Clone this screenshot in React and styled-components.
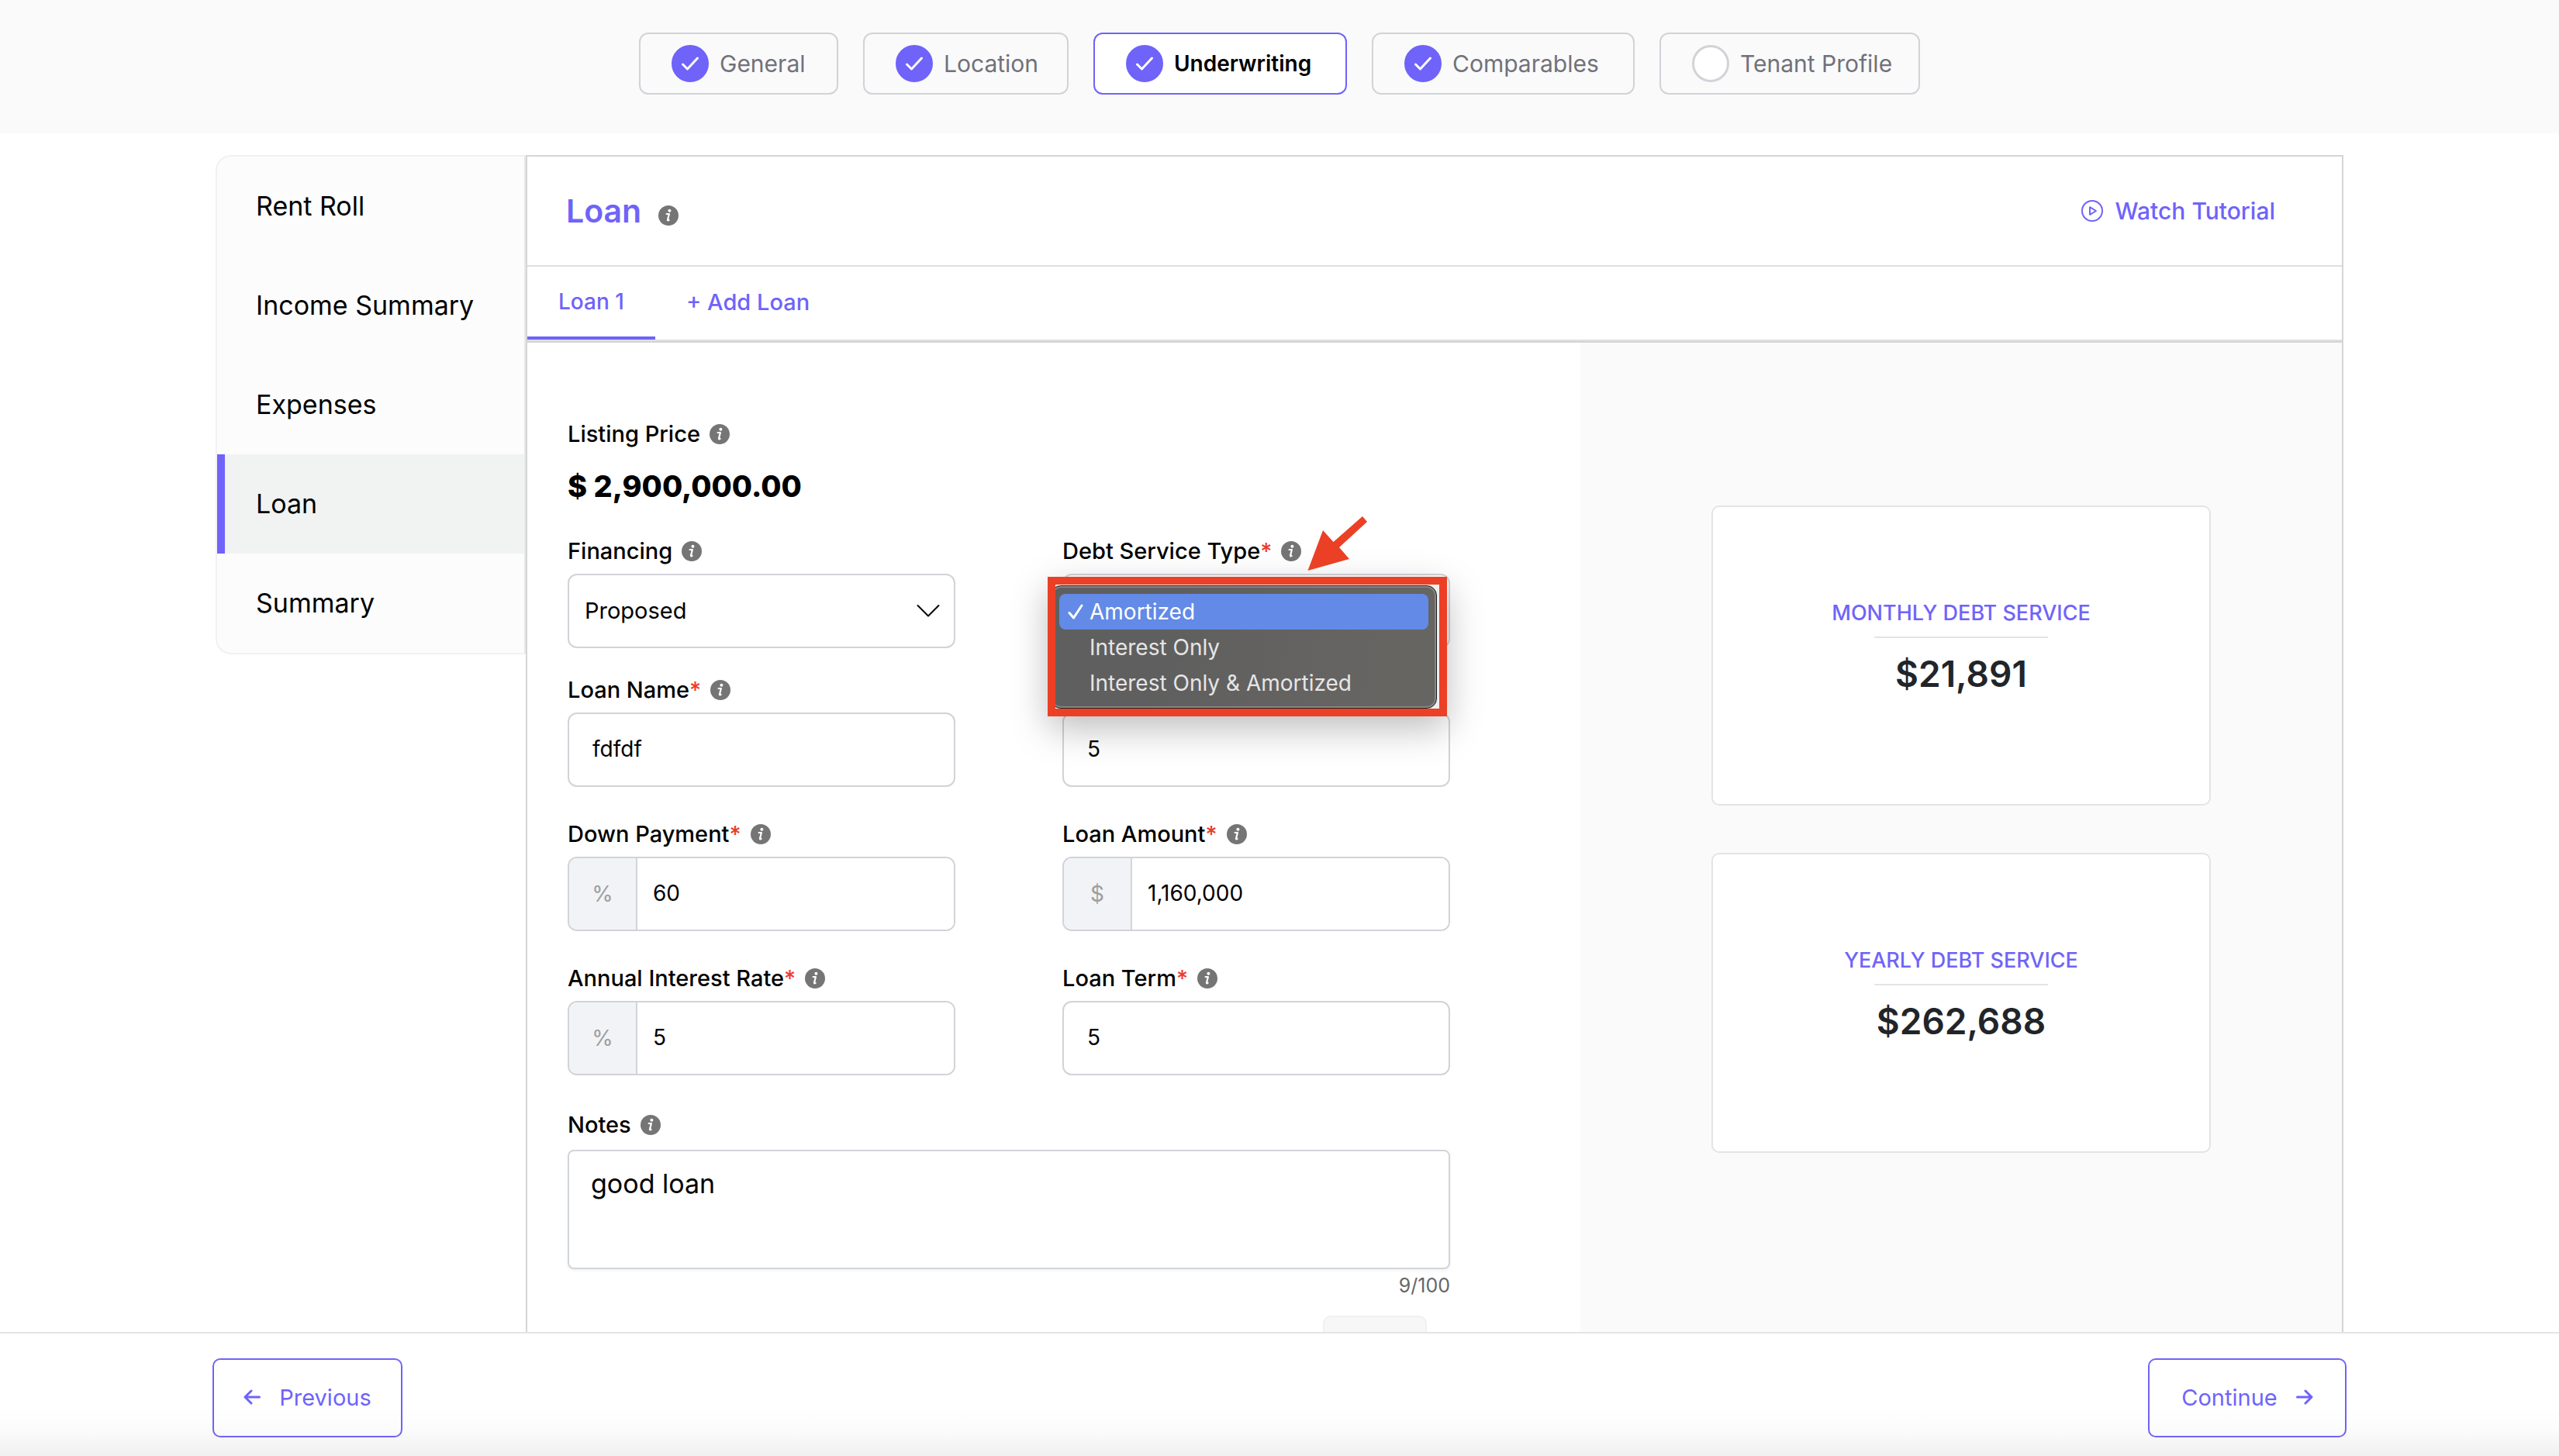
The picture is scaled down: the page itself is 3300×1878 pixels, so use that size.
import React, { useState } from "react";
import styled, { createGlobalStyle } from "styled-components";

const accent = "#6f63f9";
const line = "#d2d3d8";

const GlobalStyle = createGlobalStyle`
  *, *::before, *::after { box-sizing: border-box; }
  body { margin: 0; background: #fff; }
  body, button, input, select, textarea {
    font-family: Inter, "Open Sans", "Liberation Sans", sans-serif;
    color: #000;
  }
  button { cursor: pointer; }
`;

const Page = styled.div`
  display: flex;
  flex-direction: column;
  height: 100vh;
  overflow: hidden;
`;

/* ---------- stepper ---------- */

const Stepper = styled.nav`
  flex: none;
  display: flex;
  justify-content: center;
  gap: 32px;
  padding: 42px 32px 50px;
  background: #fafafa;
`;

const Step = styled.button`
  display: flex;
  align-items: center;
  gap: 14px;
  width: ${(p) => p.$width}px;
  height: 80px;
  padding: 0 40px;
  border: 2px solid ${(p) => (p.$active ? accent : line)};
  border-radius: 12px;
  background: ${(p) => (p.$active ? "#fff" : "transparent")};
  color: ${(p) => (p.$active ? "#000" : "#71717a")};
  font-size: ${(p) => (p.$active ? 28 : 30)}px;
  font-weight: ${(p) => (p.$active ? 600 : 400)};
  white-space: nowrap;
`;

const StepMark = styled.span`
  flex: none;
  display: flex;
  align-items: center;
  justify-content: center;
  width: 48px;
  height: 48px;
  border: 3px solid ${(p) => (p.$done ? accent : line)};
  border-radius: 50%;
  background: ${(p) => (p.$done ? accent : "#fff")};
`;

/* ---------- body ---------- */

const Body = styled.div`
  flex: 1;
  min-height: 0;
  overflow-y: auto;
  scrollbar-width: none;
  display: flex;
  align-items: flex-start;
  width: 100%;
  max-width: 2808px;
  margin: 0 auto;
  padding: 28px 32px 0;
`;

const Sidebar = styled.nav`
  flex: 0 0 400px;
  display: flex;
  flex-direction: column;
  border: 2px solid #f1f1f1;
  border-right-color: #e8e8ea;
  border-radius: 20px 0 0 20px;
  background: #fcfcfc;
  overflow: hidden;
`;

const SideLink = styled.a`
  display: flex;
  align-items: center;
  height: 128px;
  padding: 0 0 2px 40px;
  border-left: 10px solid ${(p) => (p.$active ? accent : "transparent")};
  background: ${(p) => (p.$active ? "#f0f3f2" : "transparent")};
  color: #000;
  font-size: 34px;
  text-decoration: none;
`;

const Panel = styled.main`
  flex: 1;
  min-width: 0;
  border: 2px solid #d5d5d5;
`;

const PanelHeader = styled.header`
  display: flex;
  align-items: center;
  justify-content: space-between;
  height: 142px;
  padding: 0 86px 0 50px;
  border-bottom: 2px solid #dfdfdf;
`;

const Title = styled.h1`
  display: flex;
  align-items: flex-end;
  gap: 22px;
  margin: 0;
  color: ${accent};
  font-size: 41px;
  font-weight: 600;
  line-height: 38px;
`;

const TutorialLink = styled.a`
  display: flex;
  align-items: center;
  gap: 16px;
  color: ${accent};
  font-size: 30px;
  font-weight: 500;
  text-decoration: none;
`;

const Tabs = styled.div`
  display: flex;
  height: 96px;
  border-bottom: 2px solid #dfdfdf;
`;

const Tab = styled.button`
  min-width: ${(p) => (p.$active ? 165 : 238)}px;
  padding: 0 40px;
  border: 0;
  border-bottom: 4px solid ${(p) => (p.$active ? accent : "transparent")};
  background: none;
  color: ${accent};
  font-size: ${(p) => (p.$active ? 28 : 29)}px;
  font-weight: 500;
  text-align: left;
  white-space: nowrap;
`;

const Columns = styled.div`
  display: grid;
  grid-template-columns: minmax(0, 1358fr) minmax(0, 982fr);
  border-top: 2px solid #d4d4d4;
`;

/* ---------- form ---------- */

const Form = styled.form`
  padding: 102px 168px 48px 52px;
`;

const Grid = styled.div`
  display: grid;
  grid-template-columns: repeat(2, minmax(0, 1fr));
  column-gap: 138px;
  row-gap: 45px;
  align-items: end;
  margin-bottom: ${(p) => p.$after}px;
`;

const Field = styled.div`
  display: flex;
  flex-direction: column;
  gap: ${(p) => p.$gap || 13}px;
`;

const LabelRow = styled.div`
  display: flex;
  align-items: center;
  gap: 12px;
  height: 32px;
  font-size: 29px;
  font-weight: 500;
  line-height: 32px;
  white-space: nowrap;
`;

const Required = styled.span`
  color: #ee3a2b;
`;

const Price = styled.p`
  margin: 27px 0 44px;
  font-size: 38px;
  font-weight: 800;
  line-height: 48px;
`;

const TextInput = styled.input`
  width: 100%;
  height: 96px;
  padding: 0 30px 2px;
  border: 2px solid ${line};
  border-radius: 12px;
  background: #fff;
  font-size: 28px;
`;

const Group = styled.div`
  display: flex;
  height: 96px;
  border: 2px solid ${line};
  border-radius: 12px;
  overflow: hidden;
`;

const Prefix = styled.span`
  flex: 0 0 88px;
  display: flex;
  align-items: center;
  justify-content: center;
  border-right: 2px solid #d1d5db;
  background: #f2f3f6;
  color: #9e9e9e;
  font-size: 28px;
`;

const GroupInput = styled.input`
  flex: 1;
  width: 0;
  min-width: 0;
  padding: 0 20px 2px;
  border: 0;
  background: #fff;
  font-size: 28px;
`;

const SelectBox = styled.div`
  position: relative;
  display: grid;
  align-items: center;
  > * { grid-area: 1 / 1; }
`;

const Select = styled.select`
  width: 100%;
  height: 96px;
  padding: 0 20px 2px;
  border: 2px solid ${line};
  border-radius: 12px;
  background: #fff;
  font-size: 29px;
  appearance: none;
`;

const Chevron = styled.svg`
  justify-self: end;
  margin-right: 20px;
  pointer-events: none;
`;

const Highlight = styled.div`
  position: absolute;
  z-index: 2;
  top: 4px;
  right: 4px;
  left: -19px;
  height: 180px;
  border: 10px solid #eb4025;
  background: #eeeeee;
  box-shadow: 0 16px 44px rgba(0, 0, 0, 0.26);
  overflow: hidden;
`;

const Pointer = styled.svg`
  position: absolute;
  z-index: 3;
  top: -75px;
  left: 315px;
`;

const Menu = styled.ul`
  height: 159px;
  margin: 1px 3px 0 -6px;
  padding: 10px;
  border: 1px solid #1f1f1f;
  border-radius: 13px;
  background: linear-gradient(100deg, #5f5f5f 30%, #676562 85%);
  box-shadow: inset 0 0 0 2px #868686;
  list-style: none;
`;

const Option = styled.li`
  display: flex;
  align-items: center;
  gap: 8px;
  height: 46px;
  padding-left: 11px;
  border-radius: 8px;
  background: ${(p) => (p.$selected ? "#628ae6" : "transparent")};
  color: ${(p) => (p.$selected ? "#fff" : "#e6e6e6")};
  font-size: 28px;
  white-space: nowrap;
`;

const Tick = styled.svg`
  flex: none;
  visibility: ${(p) => (p.$shown ? "visible" : "hidden")};
`;

const Notes = styled.textarea`
  display: block;
  width: 100%;
  height: 154px;
  padding: 22px 28px;
  border: 2px solid #d1d5da;
  border-radius: 8px;
  box-shadow: 0 2px 4px rgba(0, 0, 0, 0.06);
  font-size: 34px;
  line-height: 40px;
  resize: none;
`;

const Counter = styled.div`
  margin-top: 6px;
  color: #666;
  font-size: 25px;
  line-height: 30px;
  text-align: right;
`;

const SaveButton = styled.button`
  display: block;
  width: 134px;
  height: 72px;
  margin: 24px 30px 0 auto;
  border: 2px solid #f0f0f0;
  border-radius: 10px;
  background: #f7f7f7;
`;

/* ---------- summary ---------- */

const Summary = styled.aside`
  display: flex;
  flex-direction: column;
  align-items: center;
  gap: 61px;
  padding: 210px 32px 48px;
  background: #fafafa;
`;

const Card = styled.section`
  display: flex;
  flex-direction: column;
  align-items: center;
  width: 100%;
  max-width: 644px;
  height: 387px;
  padding-top: 121px;
  border: 2px solid #e4e4e4;
  border-radius: 10px;
  background: #fff;
`;

const CardTitle = styled.h2`
  margin: 0;
  color: ${accent};
  font-size: 27px;
  font-weight: 500;
  line-height: 32px;
`;

const Rule = styled.hr`
  width: 224px;
  margin: 14px 0 18px;
  border: 0;
  border-top: 2px solid #e4e4e4;
`;

const Amount = styled.p`
  margin: 0;
  color: #212529;
  font-size: 46px;
  font-weight: 600;
  line-height: 56px;
`;

/* ---------- footer ---------- */

const Footer = styled.footer`
  flex: none;
  border-top: 2px solid #e4e4e4;
  background: linear-gradient(#fff 58%, #fcfcfc 78%, #f0f0f0 100%);
`;

const FooterRow = styled.div`
  display: flex;
  justify-content: space-between;
  width: 100%;
  max-width: 2816px;
  margin: 0 auto;
  padding: 32px 32px 24px;
`;

const NavButton = styled.button`
  display: flex;
  align-items: center;
  justify-content: center;
  gap: 24px;
  min-width: ${(p) => p.$width}px;
  height: 102px;
  padding: 0 32px 2px;
  border: 2px solid ${accent};
  border-radius: 10px;
  background: transparent;
  color: ${accent};
  font-size: 29px;
`;

/* ---------- icons ---------- */

const InfoIcon = () => (
  <svg width="26" height="26" viewBox="0 0 26 26" aria-hidden="true">
    <circle cx="13" cy="13" r="13" fill="#757575" />
    <circle cx="14.4" cy="6.8" r="2" fill="#fff" />
    <path
      d="M10.6 11h3.300l-1.900 7.600c-.2.9.5 1 1.600.2"
      fill="none"
      stroke="#fff"
      strokeWidth="2.2"
      strokeLinecap="round"
      strokeLinejoin="round"
    />
  </svg>
);

const CheckIcon = () => (
  <svg width="24" height="18" viewBox="0 0 24 18" fill="none" aria-hidden="true">
    <path d="M2.500 10l6 6L21.500 2" stroke="#fff" strokeWidth="3" strokeLinecap="round" strokeLinejoin="round" />
  </svg>
);

const PlayIcon = () => (
  <svg width="28" height="28" viewBox="0 0 28 28" fill="none" stroke={accent} strokeWidth="2" strokeLinejoin="round" aria-hidden="true">
    <circle cx="14" cy="14" r="13" />
    <path d="M11 9.200v9.600l8-4.800z" />
  </svg>
);

const ArrowIcon = ({ left }) => (
  <svg width="22" height="20" viewBox="0 0 22 20" fill="none" stroke={accent} strokeWidth="3" strokeLinecap="round" strokeLinejoin="round" aria-hidden="true">
    <path d={left ? "M20.500 10H2M10 2L2 10l8 8" : "M1.500 10H20M12 2l8 8-8 8"} />
  </svg>
);

const ChevronIcon = () => (
  <Chevron width="30" height="18" viewBox="0 0 30 18" fill="none" aria-hidden="true">
    <path d="M1.500 2L15 15.500 28.500 2" stroke="#000" strokeWidth="2" strokeLinecap="round" strokeLinejoin="round" />
  </Chevron>
);

/* ---------- composed parts ---------- */

const Caption = ({ htmlFor, required, children }) => (
  <LabelRow>
    <label htmlFor={htmlFor}>
      {children}
      {required && <Required>*</Required>}
    </label>
    <InfoIcon />
  </LabelRow>
);

const InputField = ({ id, label, value, prefix }) => (
  <Field>
    <Caption htmlFor={id} required>
      {label}
    </Caption>
    {prefix ? (
      <Group>
        <Prefix>{prefix}</Prefix>
        <GroupInput id={id} defaultValue={value} />
      </Group>
    ) : (
      <TextInput id={id} defaultValue={value} />
    )}
  </Field>
);

const steps = [
  { name: "General", width: 257, done: true },
  { name: "Location", width: 265, done: true },
  { name: "Underwriting", width: 327, done: true, active: true },
  { name: "Comparables", width: 339, done: true },
  { name: "Tenant Profile", width: 336 },
];

const sections = ["Rent Roll", "Income Summary", "Expenses", "Loan", "Summary"];
const debtTypes = ["Amortized", "Interest Only", "Interest Only & Amortized"];

export default function App() {
  const [debtType, setDebtType] = useState(debtTypes[0]);
  const [notes, setNotes] = useState("good loan");

  return (
    <Page>
      <GlobalStyle />
      <Stepper>
        {steps.map((s) => (
          <Step key={s.name} type="button" $width={s.width} $active={s.active}>
            <StepMark $done={s.done}>{s.done && <CheckIcon />}</StepMark>
            {s.name}
          </Step>
        ))}
      </Stepper>

      <Body>
        <Sidebar>
          {sections.map((name) => (
            <SideLink key={name} href="#" $active={name === "Loan"}>
              {name}
            </SideLink>
          ))}
        </Sidebar>

        <Panel>
          <PanelHeader>
            <Title>
              Loan <InfoIcon />
            </Title>
            <TutorialLink href="#">
              <PlayIcon /> Watch Tutorial
            </TutorialLink>
          </PanelHeader>
          <Tabs>
            <Tab type="button" $active>
              Loan 1
            </Tab>
            <Tab type="button">+ Add Loan</Tab>
          </Tabs>

          <Columns>
            <Form onSubmit={(e) => e.preventDefault()}>
              <LabelRow>
                Listing Price <InfoIcon />
              </LabelRow>
              <Price>$ 2,900,000.00</Price>

              <Grid $after={38}>
                <Field>
                  <Caption htmlFor="financing">Financing</Caption>
                  <SelectBox>
                    <Select id="financing" defaultValue="Proposed">
                      <option>Proposed</option>
                    </Select>
                    <ChevronIcon />
                  </SelectBox>
                </Field>
                <Field>
                  <Caption htmlFor="debt-type" required>
                    Debt Service Type
                  </Caption>
                  <SelectBox>
                    <Select id="debt-type" value={debtType} onChange={(e) => setDebtType(e.target.value)}>
                      {debtTypes.map((t) => (
                        <option key={t}>{t}</option>
                      ))}
                    </Select>
                    <Highlight>
                      <Menu role="listbox" aria-label="Debt Service Type">
                        {debtTypes.map((t) => (
                          <Option
                            key={t}
                            role="option"
                            aria-selected={t === debtType}
                            $selected={t === debtType}
                            onClick={() => setDebtType(t)}
                          >
                            <Tick $shown={t === debtType} width="20" height="20" viewBox="0 0 20 20" fill="none">
                              <path d="M2 11.500L7.500 18 18 2" stroke="#fff" strokeWidth="3" strokeLinecap="round" strokeLinejoin="round" />
                            </Tick>
                            {t}
                          </Option>
                        ))}
                      </Menu>
                    </Highlight>
                    <Pointer width="80" height="72" viewBox="0 0 80 72" aria-hidden="true">
                      <path d="M1.500 71L21 19l13.500 15L72 1l6 7-36 33L55 56z" fill="#eb4025" />
                    </Pointer>
                  </SelectBox>
                </Field>
              </Grid>

              <Grid $after={48}>
                <InputField id="loan-name" label="Loan Name" value="fdfdf" />
                <TextInput aria-label="Amortization" defaultValue="5" />
                <InputField id="down-payment" label="Down Payment" value="60" prefix="%" />
                <InputField id="loan-amount" label="Loan Amount" value="1,160,000" prefix="$" />
                <InputField id="interest-rate" label="Annual Interest Rate" value="5" prefix="%" />
                <InputField id="loan-term" label="Loan Term" value="5" />
              </Grid>

              <Field $gap={16}>
                <Caption htmlFor="notes">Notes</Caption>
                <Notes id="notes" maxLength={100} value={notes} onChange={(e) => setNotes(e.target.value)} />
              </Field>
              <Counter>{notes.length}/100</Counter>
              <SaveButton type="submit" aria-label="Save" />
            </Form>

            <Summary>
              <Card>
                <CardTitle>MONTHLY DEBT SERVICE</CardTitle>
                <Rule />
                <Amount>$21,891</Amount>
              </Card>
              <Card>
                <CardTitle>YEARLY DEBT SERVICE</CardTitle>
                <Rule />
                <Amount>$262,688</Amount>
              </Card>
            </Summary>
          </Columns>
        </Panel>
      </Body>

      <Footer>
        <FooterRow>
          <NavButton type="button" $width={245}>
            <ArrowIcon left /> Previous
          </NavButton>
          <NavButton type="button" $width={256}>
            Continue <ArrowIcon />
          </NavButton>
        </FooterRow>
      </Footer>
    </Page>
  );
}
